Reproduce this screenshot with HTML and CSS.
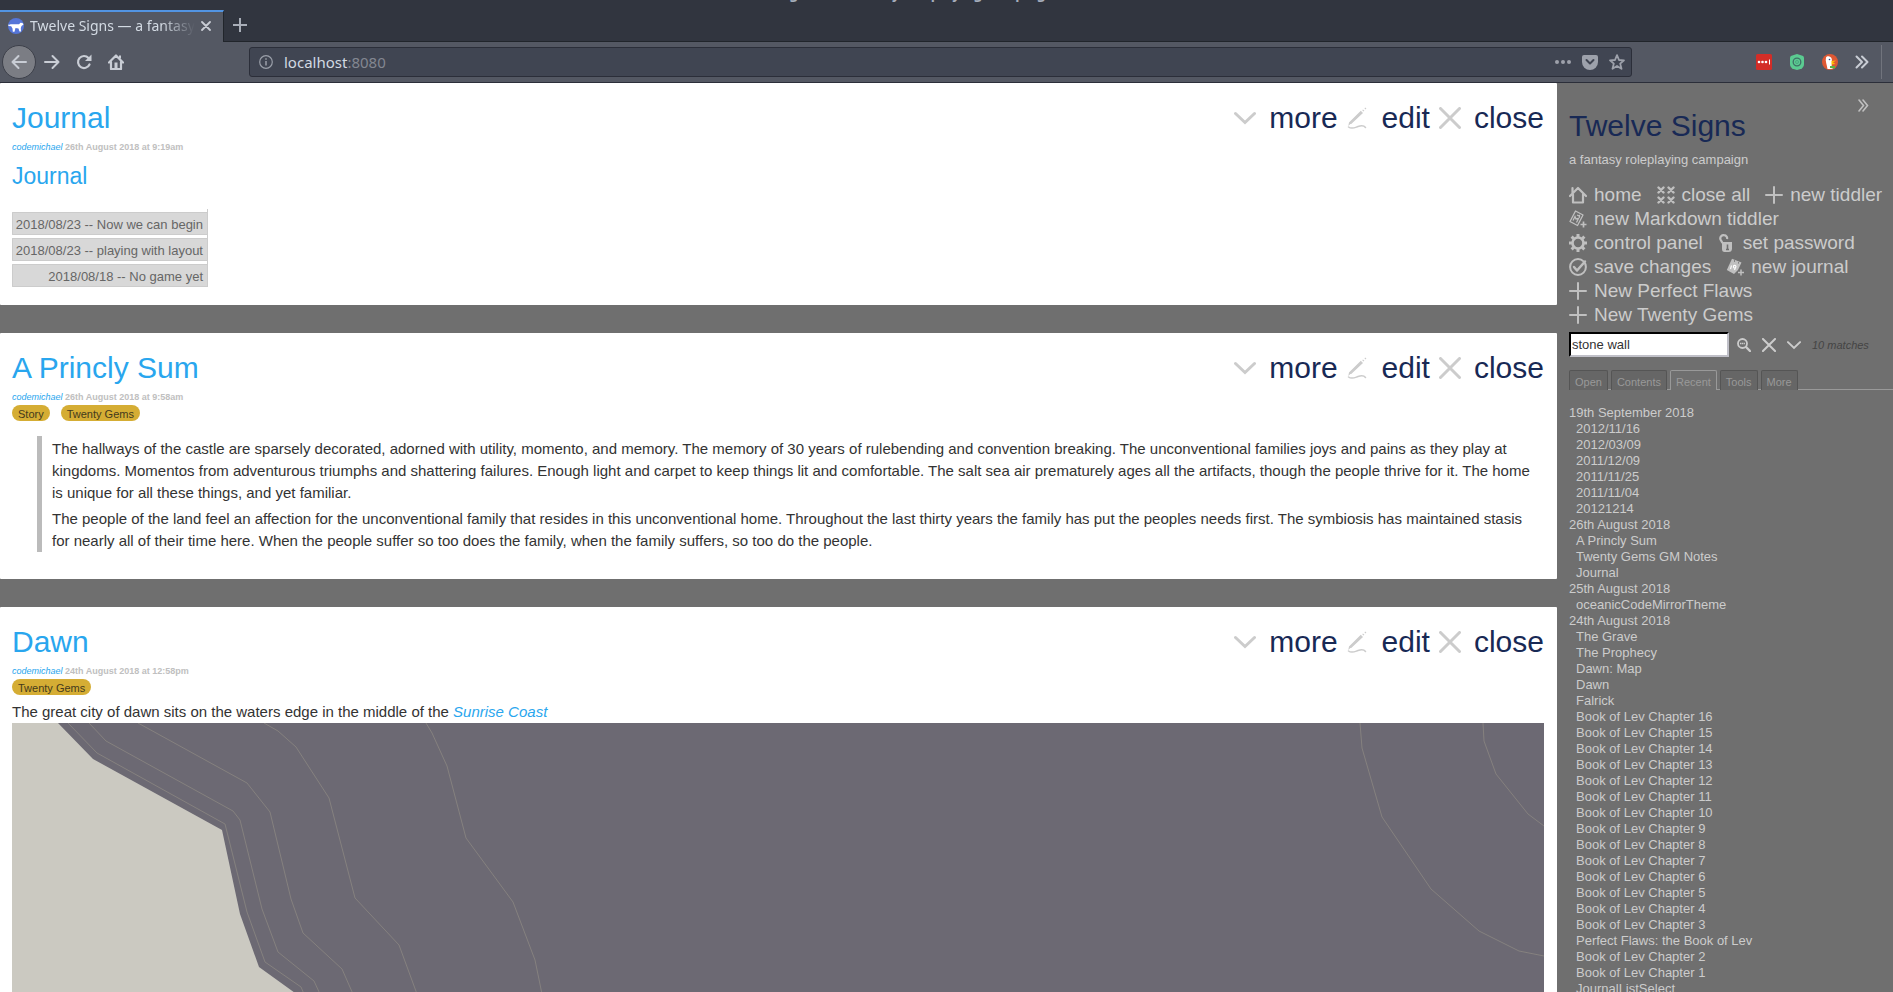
FILE: index.html
```html
<!DOCTYPE html>
<html lang="en">

<head>
    <meta charset="UTF-8">
    <meta name="viewport" content="width=device-width, initial-scale=1.0">
    <title>Twelve Signs — a fantasy roleplaying campaign</title>
    <link rel="stylesheet" href="styles.css">
</head>

<body>
    <!-- Icons used more than once -->
    <svg class="icon-defs" aria-hidden="true">
        <symbol id="icon-chevron" viewBox="0 0 22 22"><path class="line" d="M1.5 6.5 L11 15.5 L20.5 6.5"/></symbol>
        <symbol id="icon-close" viewBox="0 0 22 22"><path class="line" d="M1.5 1.5 L20.5 20.5 M20.5 1.5 L1.5 20.5"/></symbol>
        <symbol id="icon-pencil" viewBox="0 0 22 22"><path d="M3 16.500 L2.200 17.300 L2.500 15.800 L13.800 4.500 L15.200 5.900 L4 16.500 Z M15.600 2.800 L17 4.200 M17.800 .800 L19 2" fill="currentColor" stroke="currentColor" stroke-width="1.100"/><path d="M1.500 20 C5 22.500 8 20.500 11 19.500 C14 18.500 17 18.500 18.500 20.500" fill="none" stroke="currentColor" stroke-width="1.500" stroke-linecap="round"/></symbol>
        <symbol id="icon-plus" viewBox="0 0 18 18"><path class="line" d="M9 1 V17 M1 9 H17"/></symbol>
        <symbol id="icon-double" viewBox="0 0 14 14"><path d="M1.500 1.500 L7 7 L1.500 12.500 M7 1.500 L12.500 7 L7 12.500" fill="none" stroke="currentColor" stroke-width="2" stroke-linecap="round" stroke-linejoin="round"/></symbol>
    </svg>

    <!-- Browser window -->
    <header class="browser">
        <div class="tab-strip">
            <div class="window-title"><span>Twelve Signs — a fantasy roleplaying campaign - Mozilla Firefox</span></div>
            <div class="browser-tab">
                <svg class="favicon" viewBox="0 0 16 16"><circle cx="8" cy="8" r="8" fill="#5575d8"/><path d="M0 6.500 C1 7.500 2 6 4 6.200 H11 L12.500 4.800 L14.500 5 L15.500 6.500 L13.500 8 L12.800 10 L13 13.500 H11.500 L10.500 10.500 L7.500 10 L6.500 13.800 H4.800 L4.500 10.500 L3 8 C1.500 8.500 0 8 0 6.500Z" fill="#fff"/></svg>
                <span class="tab-label">Twelve Signs — a fantasy roleplaying</span>
                <button class="chrome-button" aria-label="Close tab"><svg width="10" height="10" viewBox="0 0 10 10"><path d="M1 1 L9 9 M9 1 L1 9" fill="none" stroke="currentColor" stroke-width="1.800" stroke-linecap="round"/></svg></button>
            </div>
            <button class="chrome-button new-tab" aria-label="New tab"><svg width="14" height="14" viewBox="0 0 14 14"><path d="M7 0 V14 M0 7 H14" fill="none" stroke="currentColor" stroke-width="2"/></svg></button>
        </div>
        <nav class="toolbar">
            <div class="nav-buttons">
                <button class="chrome-button back" aria-label="Back"><svg width="16" height="16" viewBox="0 0 16 16"><path d="M15 8 H1.500 M7.500 2 L1.500 8 L7.500 14" fill="none" stroke="currentColor" stroke-width="2" stroke-linecap="round" stroke-linejoin="round"/></svg></button>
                <button class="chrome-button" aria-label="Forward"><svg width="16" height="16" viewBox="0 0 16 16"><path d="M1 8 H14.500 M8.500 2 L14.500 8 L8.500 14" fill="none" stroke="currentColor" stroke-width="2" stroke-linecap="round" stroke-linejoin="round"/></svg></button>
                <button class="chrome-button" aria-label="Reload"><svg width="16" height="16" viewBox="0 0 16 16"><path d="M13.500 10.500 A6 6 0 1 1 12.500 4" fill="none" stroke="currentColor" stroke-width="2.200" stroke-linecap="round"/><path d="M15.500 .500 V7 H9 Z" fill="currentColor"/></svg></button>
                <button class="chrome-button" aria-label="Home"><svg width="16" height="16" viewBox="0 0 16 16"><path d="M1 8.500 L8 1.500 L15 8.500 M3 8 V15 H13 V8" fill="none" stroke="currentColor" stroke-width="2.200" stroke-linecap="round" stroke-linejoin="round"/><path d="M6.500 8.500 h3 v6 h-3z" fill="currentColor"/><path d="M12 1.500 v3" stroke="currentColor" stroke-width="2"/></svg></button>
            </div>
            <div class="url-bar">
                <svg width="14" height="14" viewBox="0 0 14 14"><circle cx="7" cy="7" r="6.300" fill="none" stroke="currentColor" stroke-width="1.200"/><path d="M7 6 V10.500 M7 3.200 V4.800" stroke="currentColor" stroke-width="1.500"/></svg>
                <span class="url">localhost<span class="port">:8080</span></span>
                <button class="chrome-button" aria-label="Page actions"><svg width="16" height="4" viewBox="0 0 16 4"><circle cx="2" cy="2" r="2" fill="currentColor"/><circle cx="8" cy="2" r="2" fill="currentColor"/><circle cx="14" cy="2" r="2" fill="currentColor"/></svg></button>
                <button class="chrome-button" aria-label="Save to Pocket"><svg width="16" height="15" viewBox="0 0 16 15"><path d="M2 0 H14 Q16 0 16 2 V7 A8 8 0 0 1 0 7 V2 Q0 0 2 0Z" fill="currentColor"/><path d="M4.500 5 L8 8.500 L11.500 5" fill="none" stroke="#404552" stroke-width="2" stroke-linecap="round" stroke-linejoin="round"/></svg></button>
                <button class="chrome-button" aria-label="Bookmark"><svg width="16" height="16" viewBox="0 0 16 16"><path d="M8 1.200 L10 6 L15 6.300 L11.200 9.600 L12.500 14.800 L8 12 L3.500 14.800 L4.800 9.600 L1 6.300 L6 6 Z" fill="none" stroke="currentColor" stroke-width="1.800" stroke-linejoin="round"/></svg></button>
            </div>
            <div class="extensions">
                <svg width="16" height="16" viewBox="0 0 16 16"><rect width="16" height="16" rx="1.500" fill="#d32d27"/><g fill="#fff"><circle cx="3" cy="8" r="1.300"/><circle cx="6.500" cy="8" r="1.300"/><circle cx="10" cy="8" r="1.300"/><path d="M13 5.500 h1 v5 h-1z"/></g></svg>
                <svg width="16" height="16" viewBox="0 0 16 16"><path d="M8 0 L13.500 1.800 Q15 2.300 15 4 V10 Q15 13.500 11.500 15 L8 16 L4.500 15 Q1 13.500 1 10 V4 Q1 2.300 2.500 1.800Z" fill="#5bcb91"/><circle cx="8" cy="8" r="3.800" fill="none" stroke="#3f6f66" stroke-width="1.300"/><circle cx="8" cy="8" r="1.500" fill="none" stroke="#4a9a7c" stroke-width=".800"/></svg>
                <svg width="16" height="16" viewBox="0 0 16 16"><circle cx="8" cy="8" r="8" fill="#de5833"/><path d="M4 3.500 C5 1.500 9 2 9.800 5 L10 9 L9.500 13 L11 15 H5.500 C5 11 3 7 4 3.500Z" fill="#fff"/><path d="M9.500 7 L14 6.500 L11 8.500 L13.500 10 L9.500 10.500Z" fill="#fdc000"/><path d="M8 12 h5 v2.500 l-5 -.500z" fill="#59b346"/><circle cx="7.500" cy="5.500" r=".800" fill="#2d4f8e"/></svg>
                <button class="chrome-button overflow" aria-label="More tools"><svg width="14" height="14"><use href="#icon-double"/></svg></button>
            </div>
        </nav>
    </header>

    <div class="page">
        <main class="story">
            <article class="tiddler">
                <div class="title-row">
                    <h1>Journal</h1>
                    <div class="controls">
                        <button><svg><use href="#icon-chevron"/></svg>more</button>
                        <button><svg><use href="#icon-pencil"/></svg>edit</button>
                        <button><svg><use href="#icon-close"/></svg>close</button>
                    </div>
                </div>
                <div class="subtitle"><a href="#">codemichael</a> 26th August 2018 at 9:19am</div>
                <h2>Journal</h2>
                <div class="journal-tabs">
                    <button>2018/08/23 -- Now we can begin</button>
                    <button>2018/08/23 -- playing with layout</button>
                    <button>2018/08/18 -- No game yet</button>
                </div>
            </article>

            <article class="tiddler">
                <div class="title-row">
                    <h1>A Princly Sum</h1>
                    <div class="controls">
                        <button><svg><use href="#icon-chevron"/></svg>more</button>
                        <button><svg><use href="#icon-pencil"/></svg>edit</button>
                        <button><svg><use href="#icon-close"/></svg>close</button>
                    </div>
                </div>
                <div class="subtitle"><a href="#">codemichael</a> 26th August 2018 at 9:58am</div>
                <div class="tags"><button>Story</button><button>Twenty Gems</button></div>
                <blockquote>
                    <p>The hallways of the castle are sparsely decorated, adorned with utility, momento, and memory. The memory of 30 years of rulebending and convention breaking. The unconventional families joys and pains as they play at kingdoms. Momentos from adventurous triumphs and shattering failures. Enough light and carpet to keep things lit and comfortable. The salt sea air prematurely ages all the artifacts, though the people thrive for it. The home is unique for all these things, and yet familiar.</p>
                    <p>The people of the land feel an affection for the unconventional family that resides in this unconventional home. Throughout the last thirty years the family has put the peoples needs first. The symbiosis has maintained stasis for nearly all of their time here. When the people suffer so too does the family, when the family suffers, so too do the people.</p>
                </blockquote>
            </article>

            <article class="tiddler">
                <div class="title-row">
                    <h1>Dawn</h1>
                    <div class="controls">
                        <button><svg><use href="#icon-chevron"/></svg>more</button>
                        <button><svg><use href="#icon-pencil"/></svg>edit</button>
                        <button><svg><use href="#icon-close"/></svg>close</button>
                    </div>
                </div>
                <div class="subtitle"><a href="#">codemichael</a> 24th August 2018 at 12:58pm</div>
                <div class="tags"><button>Twenty Gems</button></div>
                <p class="intro">The great city of dawn sits on the waters edge in the middle of the <a href="#">Sunrise Coast</a></p>
                <!-- Coast map -->
                <svg class="map" viewBox="0 0 1532 400">
                    <rect width="1532" height="400" fill="#6c6973"/>
                    <path d="M0 0 H46 L81 36 L210 107 L228 191 L247 244 L290 275 L330 310 V400 H0Z" fill="#cbc9c1"/>
                    <g fill="none" stroke="#85817f" stroke-width="1">
                        <path d="M56 0 L85 30 L213 101 L235 189 L253 239 L289 264 L292 271 L310 320"/>
                        <path d="M77 0 L94 18 L221 88 L228 97 L250 186 L266 229 L302 258 L308 271 L325 320"/>
                        <path d="M126 0 L235 60 L258 89 L279 176 L291 210 L330 246 L341 271 L360 320"/>
                        <path d="M252 0 L266 8 L284 24 L317 75 L343 175 L387 222 L405 271 L420 320"/>
                        <path d="M414 0 L420 10 L435 43 L454 115 L501 179 L523 237 L530 271 L535 320"/>
                        <path d="M1348 0 L1350 25 L1370 94 L1419 166 L1467 208 L1507 228 L1532 233"/>
                        <path d="M1471 0 L1472 18 L1484 51 L1516 91 L1532 103"/>
                    </g>
                </svg>
            </article>
        </main>

        <aside class="sidebar">
            <button class="hide-sidebar" aria-label="Hide sidebar"><svg width="11" height="13" viewBox="0 0 11 13"><path d="M1 1 L5.500 6.500 L1 12 M5 1 L9.500 6.500 L5 12" fill="none" stroke="currentColor" stroke-width="1.600" stroke-linecap="round"/></svg></button>
            <h1 class="site-title">Twelve Signs</h1>
            <div class="site-subtitle">a fantasy roleplaying campaign</div>

            <div class="page-controls">
                <button><svg viewBox="0 0 18 18"><path d="M1 10 L9 2 L17 10 M4 8.500 V16.500 H14 V8.500 M3.500 7 V2" fill="none" stroke="currentColor" stroke-width="2.200" stroke-linecap="round" stroke-linejoin="round"/></svg>home</button>
                <button><svg viewBox="0 0 18 18"><path d="M1.500 1.500 l5 5 m0 -5 l-5 5 M11.500 1.500 l5 5 m0 -5 l-5 5 M1.500 11.500 l5 5 m0 -5 l-5 5 M11.500 11.500 l5 5 m0 -5 l-5 5" fill="none" stroke="currentColor" stroke-width="2.400" stroke-linecap="round"/></svg>close all</button>
                <button><svg><use href="#icon-plus"/></svg>new tiddler</button>
                <button><svg viewBox="0 0 18 18"><path d="M6.500 1 L14 5 L8.500 15.500 L1 11.500 Z" fill="none" stroke="currentColor" stroke-width="1.300" stroke-linejoin="round"/><path d="M4 10.500 L6 6.500 L7 9 L9.500 8.500 L7.500 12.500 M8 5 L11 6.500 M10.500 4.800 v3" fill="none" stroke="currentColor" stroke-width="1.300"/><path d="M14.500 11.500 v6 M11.500 14.500 h6" stroke="currentColor" stroke-width="1.700"/></svg>new Markdown tiddler</button>
                <button><svg viewBox="0 0 18 18"><circle cx="9" cy="9" r="5.500" fill="none" stroke="currentColor" stroke-width="2.600"/><path d="M9 0 V3 M9 15 V18 M0 9 H3 M15 9 H18 M2.600 2.600 L4.800 4.800 M13.200 13.200 L15.400 15.400 M15.400 2.600 L13.200 4.800 M4.800 13.200 L2.600 15.400" stroke="currentColor" stroke-width="3"/></svg>control panel</button>
                <button><svg viewBox="0 0 18 18"><path d="M4 8 H14 V14.500 Q14 18 10.500 18 H6.500 Q4 18 4 15 Z" fill="currentColor"/><path d="M4.500 9 L2.500 5.500 C1.500 3 4 .800 6 1.200 C8.500 1.500 9.500 3.500 9 5" fill="none" stroke="currentColor" stroke-width="2.200"/><path d="M9.500 10.500 V15.500 M8 15.500 h3" stroke="#6f6f6f" stroke-width="1.600"/></svg>set password</button>
                <button><svg viewBox="0 0 18 18"><circle cx="9" cy="9" r="7.900" fill="none" stroke="currentColor" stroke-width="2"/><path d="M5 9 L8 12.500 L16 3.500" fill="none" stroke="currentColor" stroke-width="2.500" stroke-linecap="round" stroke-linejoin="round"/></svg>save changes</button>
                <button><svg viewBox="0 0 18 18"><path d="M6 .800 L15.500 4.500 L12 12 L8 16 L.800 12 Z" fill="currentColor"/><path d="M8 3 h1 M12 4.800 h1" stroke="#6f6f6f" stroke-width="1.300"/><path d="M5.500 7.500 L4.500 11 M8.800 10 A1.300 1.300 0 1 1 10 8.500 L8.500 12" fill="none" stroke="#fff" stroke-width="1.100"/><path d="M15 11.500 v6 M12 14.500 h6" stroke="currentColor" stroke-width="1.500"/></svg>new journal</button>
                <button><svg><use href="#icon-plus"/></svg>New Perfect Flaws</button>
                <button><svg><use href="#icon-plus"/></svg>New Twenty Gems</button>
            </div>

            <div class="search">
                <input type="search" value="stone wall" aria-label="Search">
                <button aria-label="Advanced search"><svg viewBox="0 0 14 14"><circle cx="5.500" cy="5.500" r="4.500" fill="none" stroke="currentColor" stroke-width="1.800"/><path d="M9 9 L13 13" stroke="currentColor" stroke-width="2.400" stroke-linecap="round"/><path d="M3 5.500 h5" stroke="currentColor" stroke-width="1.300" stroke-dasharray="1.300 .500"/></svg></button>
                <button aria-label="Clear search"><svg><use href="#icon-close"/></svg></button>
                <button aria-label="Search results"><svg><use href="#icon-chevron"/></svg></button>
                <span class="matches">10 matches</span>
            </div>

            <div class="side-tabs">
                <button>Open</button>
                <button>Contents</button>
                <button class="selected">Recent</button>
                <button>Tools</button>
                <button>More</button>
            </div>

            <div class="recent">
                <div>19th September 2018</div>
                <a href="#">2012/11/16</a>
                <a href="#">2012/03/09</a>
                <a href="#">2011/12/09</a>
                <a href="#">2011/11/25</a>
                <a href="#">2011/11/04</a>
                <a href="#">20121214</a>
                <div>26th August 2018</div>
                <a href="#">A Princly Sum</a>
                <a href="#">Twenty Gems GM Notes</a>
                <a href="#">Journal</a>
                <div>25th August 2018</div>
                <a href="#">oceanicCodeMirrorTheme</a>
                <div>24th August 2018</div>
                <a href="#">The Grave</a>
                <a href="#">The Prophecy</a>
                <a href="#">Dawn: Map</a>
                <a href="#">Dawn</a>
                <a href="#">Falrick</a>
                <a href="#">Book of Lev Chapter 16</a>
                <a href="#">Book of Lev Chapter 15</a>
                <a href="#">Book of Lev Chapter 14</a>
                <a href="#">Book of Lev Chapter 13</a>
                <a href="#">Book of Lev Chapter 12</a>
                <a href="#">Book of Lev Chapter 11</a>
                <a href="#">Book of Lev Chapter 10</a>
                <a href="#">Book of Lev Chapter 9</a>
                <a href="#">Book of Lev Chapter 8</a>
                <a href="#">Book of Lev Chapter 7</a>
                <a href="#">Book of Lev Chapter 6</a>
                <a href="#">Book of Lev Chapter 5</a>
                <a href="#">Book of Lev Chapter 4</a>
                <a href="#">Book of Lev Chapter 3</a>
                <a href="#">Perfect Flaws: the Book of Lev</a>
                <a href="#">Book of Lev Chapter 2</a>
                <a href="#">Book of Lev Chapter 1</a>
                <a href="#">JournalListSelect</a>
            </div>
        </aside>
    </div>
</body>

</html>
```
FILE: styles.css
```css
* {
    box-sizing: border-box;
}

body {
    margin: 0;
    height: 100vh;
    display: flex;
    flex-direction: column;
    overflow: hidden;
    background-color: #6f6f6f;
    color: #333;
    font-family: "Liberation Sans", Arial, sans-serif;
    font-size: 15px;
    line-height: 22px;
}

h1, h2, p {
    margin: 0;
    font-weight: normal;
}

a {
    text-decoration: none;
}

button {
    margin: 0;
    padding: 0;
    border: none;
    background: none;
    color: inherit;
    font-family: inherit;
    white-space: nowrap;
    cursor: pointer;
}

svg {
    display: block;
    flex: none;
}

.icon-defs {
    position: absolute;
    width: 0;
    height: 0;
}

.line {
    fill: none;
    stroke: currentColor;
    stroke-linecap: round;
    vector-effect: non-scaling-stroke;
}

/* browser window */

.browser {
    flex: none;
    font-family: "Noto Sans", "Open Sans", sans-serif;
    color: #d3dae3;
}

.tab-strip {
    position: relative;
    display: flex;
    align-items: flex-end;
    height: 42px;
    background-color: #31353f;
    border-bottom: 1px solid #21252b;
}

.window-title {
    position: absolute;
    top: 0;
    left: 0;
    right: 0;
    height: 3px;
    display: flex;
    align-items: flex-end;
    justify-content: center;
    overflow: hidden;
    color: #a5adbb;
    font-size: 14px;
    font-weight: bold;
    line-height: 18px;
}

.browser-tab {
    display: flex;
    align-items: center;
    width: 224px;
    height: 32px;
    margin-bottom: -1px;
    padding: 0 12px 2px 8px;
    background-color: #545863;
    border-top: 2px solid #5294e2;
    border-right: 1px solid #21252b;
}

.favicon {
    width: 16px;
    height: 16px;
}

.tab-label {
    flex: 1;
    min-width: 0;
    margin: 0 6px;
    overflow: hidden;
    white-space: nowrap;
    font-size: 14px;
    -webkit-mask-image: linear-gradient(to right, #000 80%, transparent);
    mask-image: linear-gradient(to right, #000 80%, transparent);
}

.chrome-button {
    display: flex;
    align-items: center;
    justify-content: center;
    color: #c9cdd5;
}

.new-tab {
    width: 32px;
    height: 32px;
    color: #a9aeb8;
}

.toolbar {
    display: flex;
    align-items: center;
    height: 41px;
    background-color: #545863;
    border-bottom: 1px solid #2b2e39;
}

.nav-buttons {
    display: flex;
    align-items: center;
    width: 249px;
    padding-left: 2px;
}

.nav-buttons .chrome-button {
    width: 32px;
    height: 34px;
}

.nav-buttons .back {
    width: 34px;
    border: 1px solid #3d404a;
    border-radius: 50%;
    background-color: #7b7d84;
}

.url-bar {
    flex: 1;
    display: flex;
    align-items: center;
    height: 30px;
    padding: 0 6px 0 9px;
    gap: 11px;
    background-color: #404552;
    border: 1px solid #2b2e39;
    border-radius: 3px;
    color: #9a9fa9;
}

.url-bar .chrome-button {
    color: #9da1ab;
}

.url {
    flex: 1;
    color: #d3dae3;
    font-size: 15px;
}

.port {
    color: #838791;
}

.extensions {
    display: flex;
    align-items: center;
    justify-content: flex-end;
    gap: 17px;
    width: 250px;
    height: 34px;
    margin-right: 11px;
    padding-right: 12px;
    border-right: 1px solid #71747d;
}

/* page */

.page {
    flex: 1;
    min-height: 0;
    display: flex;
    overflow: hidden;
}

.story {
    flex: 1;
    min-width: 0;
}

.tiddler {
    margin-bottom: 28px;
    padding: 18px 13px 18px 12px;
    background-color: #fff;
    border-radius: 1px;
}

.title-row {
    display: flex;
    justify-content: space-between;
    color: #29a6ee;
}

.title-row h1,
.site-title {
    font-size: 30px;
    line-height: 34px;
}

.controls {
    display: flex;
    gap: 9px;
}

.controls button {
    display: flex;
    align-items: center;
    gap: 13px;
    color: #182955;
    font-size: 30px;
    line-height: 34px;
}

.controls svg {
    width: 22px;
    height: 22px;
    color: #ccc;
    stroke-width: 3px;
}

.subtitle {
    margin-top: 4px;
    color: #c0c0c0;
    font-size: 9px;
    font-weight: bold;
    line-height: 16px;
}

.subtitle a {
    color: #29a6ee;
    font-style: italic;
    font-weight: normal;
}

.tiddler h2 {
    margin-top: 7px;
    color: #29a6ee;
    font-size: 23px;
    line-height: 28px;
}

.journal-tabs {
    display: flex;
    flex-direction: column;
    gap: 3px;
    width: 196px;
    margin-top: 19px;
    padding-top: 3px;
    border-right: 1px solid #ccc;
}

.journal-tabs button {
    height: 23px;
    padding: 2px 4px 0 0;
    border: 1px solid #ccc;
    border-right: none;
    border-radius: 1px 0 0 1px;
    background-color: #d8d8d8;
    color: #666;
    font-size: 13px;
    text-align: right;
}

.tags {
    display: flex;
    gap: 11px;
}

.tags button {
    height: 16px;
    padding: 2px 6px 0;
    border-radius: 8px;
    background-color: #d5ad34;
    color: #443a1c;
    font-size: 11px;
    line-height: 14px;
}

.tiddler blockquote {
    margin: 15px 10px 9px 25px;
    padding-top: 2px;
    padding-left: 10px;
    border-left: 5px solid #bbb;
}

.tiddler blockquote p + p {
    margin-top: 4px;
}

.intro {
    margin-top: 6px;
}

.intro a {
    color: #29a6ee;
    font-style: italic;
}

.map {
    width: 100%;
}

/* sidebar */

.sidebar {
    position: relative;
    width: 336px;
    padding: 26px 0 0 12px;
    color: #ccc;
    font-size: 13px;
    line-height: 16px;
}

.hide-sidebar {
    position: absolute;
    top: 16px;
    right: 24px;
    color: #c0c0c0;
}

.site-title {
    color: #182955;
}

.site-subtitle {
    margin-top: 9px;
}

.page-controls {
    display: flex;
    flex-wrap: wrap;
    column-gap: 15px;
    margin-top: 15px;
}

.page-controls button {
    display: flex;
    align-items: center;
    gap: 7px;
    height: 24px;
    font-size: 19px;
    line-height: 24px;
}

.page-controls svg {
    width: 18px;
    height: 18px;
    color: #c0c0c0;
    stroke-width: 2px;
}

.search {
    display: flex;
    align-items: center;
    gap: 11px;
    margin-top: 5px;
}

.search input {
    width: 160px;
    height: 25px;
    margin-right: -3px;
    padding: 1px;
    border: 2px inset #c0c0cc;
    border-color: #1b1f26 #c0c0c8 #c0c0c8 #1b1f26;
    background-color: #fff;
    color: #333;
    font-family: inherit;
    font-size: 13px;
    appearance: none;
    outline: none;
}

.search input::-webkit-search-cancel-button {
    display: none;
}

.search svg {
    width: 14px;
    height: 14px;
    stroke-width: 2px;
}

.matches {
    color: #444;
    font-size: 11px;
    font-style: italic;
}

.side-tabs {
    display: flex;
    gap: 3px;
    height: 20px;
    margin-top: 13px;
    border-bottom: 1px solid #999;
}

.side-tabs button {
    height: 20px;
    padding: 2px 5px 0;
    border: 1px solid #555;
    border-bottom: none;
    border-radius: 2px 2px 0 0;
    background-color: #666;
    color: #999;
    font-size: 11px;
}

.side-tabs .selected {
    border-color: #999;
    background-color: #6f6f6f;
}

.recent {
    margin-top: 15px;
}

.recent a {
    display: block;
    padding-left: 7px;
    color: #ccc;
}
```
